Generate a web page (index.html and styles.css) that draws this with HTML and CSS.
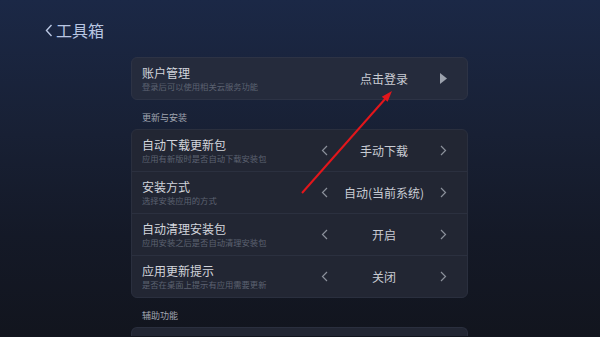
FILE: index.html
```html
<!DOCTYPE html>
<html lang="zh-CN">
<head>
    <meta charset="UTF-8">
    <meta name="viewport" content="width=device-width, initial-scale=1.0">
    <title>工具箱</title>
    <link rel="stylesheet" href="styles.css">
</head>
<body>
    <!-- Header -->
    <div class="header">
        <svg class="back" width="8" height="13" viewBox="0 0 8 13">
            <path d="M6.5 1 L1.5 6.5 L6.5 12" fill="none" stroke="#b9c6e2" stroke-width="1.4"/>
        </svg>
        <span class="header-title">工具箱</span>
    </div>

    <div class="content">
        <!-- Account -->
        <div class="card card-account">
            <div class="row">
                <div class="info">
                    <div class="title">账户管理</div>
                    <div class="sub">登录后可以使用相关云服务功能</div>
                </div>
                <div class="control">
                    <span class="arrow-slot"></span>
                    <span class="value">点击登录</span>
                    <svg class="arrow-slot" width="7" height="11" viewBox="0 0 7 11">
                        <path d="M0 0 L7 5.5 L0 11 Z" fill="#9ca2ad"/>
                    </svg>
                </div>
            </div>
        </div>

        <div class="section-label">更新与安装</div>
        <div class="card">
            <div class="row">
                <div class="info">
                    <div class="title">自动下载更新包</div>
                    <div class="sub">应用有新版时是否自动下载安装包</div>
                </div>
                <div class="control">
                    <svg class="arrow-slot" width="7" height="11" viewBox="0 0 7 11"><path d="M6 1 L1.5 5.5 L6 10" fill="none" stroke="#8b909b" stroke-width="1.2"/></svg>
                    <span class="value">手动下载</span>
                    <svg class="arrow-slot" width="7" height="11" viewBox="0 0 7 11"><path d="M1 1 L5.5 5.5 L1 10" fill="none" stroke="#8b909b" stroke-width="1.2"/></svg>
                </div>
            </div>
            <div class="row">
                <div class="info">
                    <div class="title">安装方式</div>
                    <div class="sub">选择安装应用的方式</div>
                </div>
                <div class="control">
                    <svg class="arrow-slot" width="7" height="11" viewBox="0 0 7 11"><path d="M6 1 L1.5 5.5 L6 10" fill="none" stroke="#8b909b" stroke-width="1.2"/></svg>
                    <span class="value">自动(当前系统)</span>
                    <svg class="arrow-slot" width="7" height="11" viewBox="0 0 7 11"><path d="M1 1 L5.5 5.5 L1 10" fill="none" stroke="#8b909b" stroke-width="1.2"/></svg>
                </div>
            </div>
            <div class="row">
                <div class="info">
                    <div class="title">自动清理安装包</div>
                    <div class="sub">应用安装之后是否自动清理安装包</div>
                </div>
                <div class="control">
                    <svg class="arrow-slot" width="7" height="11" viewBox="0 0 7 11"><path d="M6 1 L1.5 5.5 L6 10" fill="none" stroke="#8b909b" stroke-width="1.2"/></svg>
                    <span class="value">开启</span>
                    <svg class="arrow-slot" width="7" height="11" viewBox="0 0 7 11"><path d="M1 1 L5.5 5.5 L1 10" fill="none" stroke="#8b909b" stroke-width="1.2"/></svg>
                </div>
            </div>
            <div class="row">
                <div class="info">
                    <div class="title">应用更新提示</div>
                    <div class="sub">是否在桌面上提示有应用需要更新</div>
                </div>
                <div class="control">
                    <svg class="arrow-slot" width="7" height="11" viewBox="0 0 7 11"><path d="M6 1 L1.5 5.5 L6 10" fill="none" stroke="#8b909b" stroke-width="1.2"/></svg>
                    <span class="value">关闭</span>
                    <svg class="arrow-slot" width="7" height="11" viewBox="0 0 7 11"><path d="M1 1 L5.5 5.5 L1 10" fill="none" stroke="#8b909b" stroke-width="1.2"/></svg>
                </div>
            </div>
        </div>

        <div class="section-label">辅助功能</div>
        <div class="card card-tail"></div>
    </div>

    <!-- Red annotation arrow -->
    <svg class="annotation" width="600" height="337" viewBox="0 0 600 337">
        <line x1="302" y1="193" x2="385.5" y2="98.5" stroke="#e3161b" stroke-width="2"/>
        <polygon points="392,91 387.6,101.8 381.8,96.8" fill="#e3161b"/>
    </svg>
</body>
</html>
```

FILE: styles.css
```css
body {
    margin: 0;
    width: 600px;
    height: 337px;
    overflow: hidden;
    position: relative;
    font-family: "Noto Sans CJK SC", "Noto Sans", sans-serif;
    background: linear-gradient(180deg, #1b2846 0%, #182034 40%, #141927 70%, #12151e 100%);
}
.header {
    display: flex;
    align-items: center;
    height: 20px;
    padding: 20px 0 0 45px;
}
.header-title {
    margin-left: 3px;
    font-size: 16px;
    line-height: 20px;
    color: #b9c6e2;
}
.content {
    margin: 17px 0 0 131px;
    width: 337px;
}
.card {
    background: #222633;
    border: 1px solid #2a2f3e;
    border-radius: 6px;
}
.card-account {
    background: #252b3c;
    border-color: #2d3345;
}
.card-tail {
    height: 8px;
    border-bottom: none;
    border-radius: 6px 6px 0 0;
}
.row {
    display: flex;
    align-items: center;
    height: 41px;
}
.row + .row {
    border-top: 1px solid #2b303f;
}
.info {
    flex: 1;
    padding-left: 10px;
}
.title {
    font-size: 12px;
    line-height: 14px;
    color: #d2d5dc;
}
.sub {
    margin-top: 1px;
    font-size: 8.3px;
    line-height: 11px;
    color: #5c6271;
}
.control {
    display: flex;
    align-items: center;
    width: 126px;
    margin-right: 20px;
}
.arrow-slot {
    width: 7px;
    height: 11px;
    flex: none;
}
.value {
    flex: 1;
    text-align: center;
    font-size: 12px;
    color: #c9ccd3;
    white-space: nowrap;
}
.section-label {
    margin: 12px 0 5px;
    padding-left: 11px;
    font-size: 9px;
    line-height: 12px;
    color: #a0a5b0;
}
.annotation {
    position: absolute;
    top: 0;
    left: 0;
    pointer-events: none;
}
```
